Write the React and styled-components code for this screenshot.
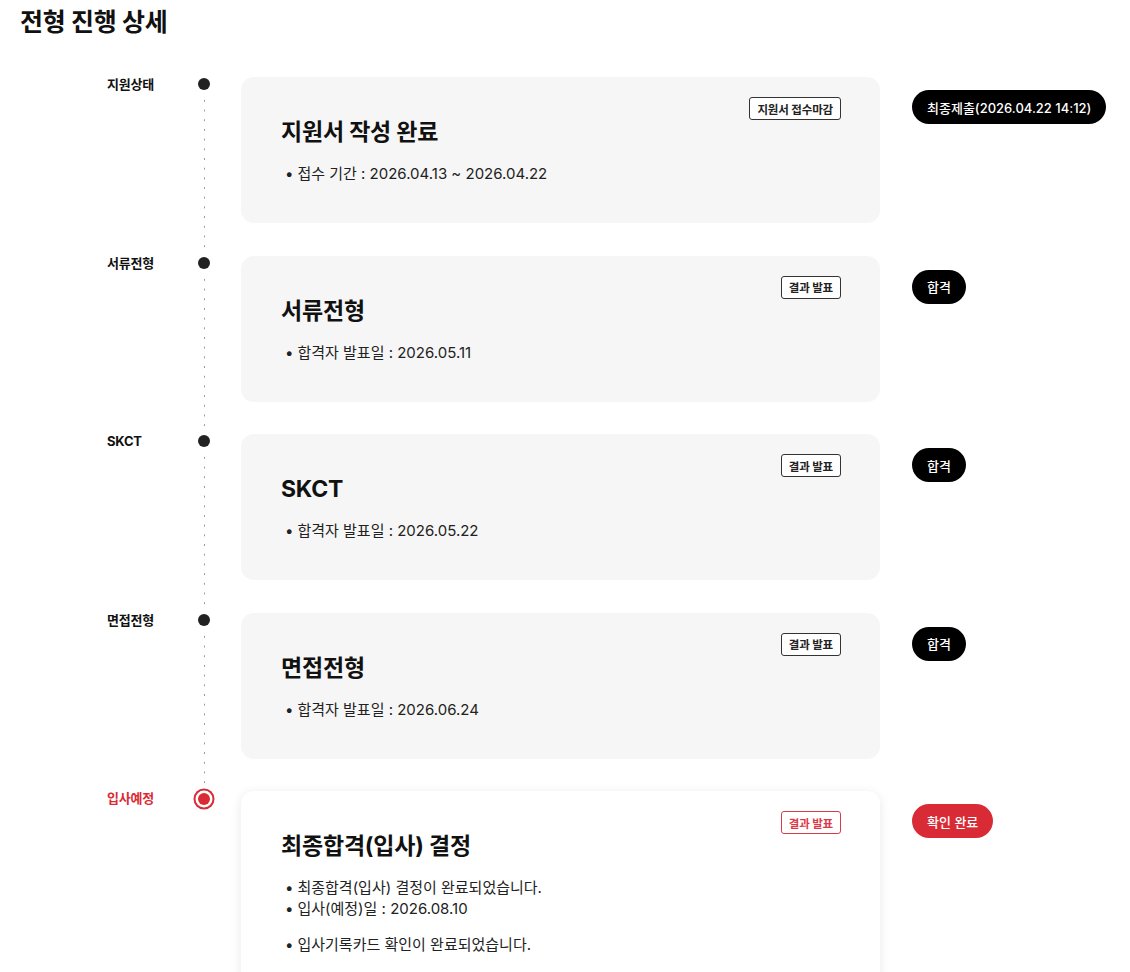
import React from "react";
import styled, { createGlobalStyle, css } from "styled-components";

const Global = createGlobalStyle`
  html, body { margin: 0; padding: 0; background: #fff; }
  body {
    font-family: Inter, "Noto Sans CJK KR", "Noto Sans", sans-serif;
    color: #111;
    -webkit-font-smoothing: antialiased;
  }
`;

const RED = "#d92b36";

const Page = styled.div`
  padding: 7px 0 0 20px;
  height: 972px;
  overflow: hidden;
  box-sizing: border-box;
`;

const PageTitle = styled.h1`
  margin: 0;
  font-size: 25px;
  line-height: 30px;
  font-weight: 700;
  color: #111;
  letter-spacing: -0.3px;
`;

const Timeline = styled.div`
  margin-top: 40px;
  padding-left: 87px;
  display: flex;
  flex-direction: column;
`;

const Row = styled.div`
  display: grid;
  grid-template-columns: 80px 54px 639px 1fr;
  align-items: stretch;
`;

const StepLabel = styled.div`
  font-size: 13px;
  line-height: 14px;
  font-weight: 700;
  color: ${(p) => (p.$active ? RED : "#111")};
  letter-spacing: -0.2px;
`;

const Rail = styled.div`
  display: flex;
  flex-direction: column;
  align-items: flex-start;
  padding-left: 11px;
`;

const Dot = styled.span`
  display: block;
  width: 12px;
  height: 12px;
  border-radius: 50%;
  background: #222;
  margin-top: 1px;
  flex: none;
  ${(p) =>
    p.$active &&
    css`
      background: ${RED};
      margin-top: 2px;
      box-shadow: 0 0 0 2.5px #fff, 0 0 0 4.5px ${RED};
    `}
`;

const DottedLine = styled.span`
  display: block;
  flex: 1;
  width: 1px;
  margin-left: 5.5px;
  margin-top: 6px;
  margin-bottom: 4px;
  background-image: linear-gradient(to bottom, transparent 0 4px, #9a9a9a 4px 5.5px, transparent 5.5px 10px);
  background-size: 1px 9.7px;
  background-repeat: repeat-y;
`;

const Card = styled.div`
  position: relative;
  box-sizing: border-box;
  min-height: 146px;
  margin-bottom: 32.5px;
  padding: 39px 40px 36px 40px;
  border-radius: 13px;
  background: ${(p) => (p.$active ? "#fff" : "#f6f6f6")};
  ${(p) =>
    p.$active &&
    css`
      box-shadow: 0 2px 12px rgba(0, 0, 0, 0.09);
      min-height: 240px;
      padding-bottom: 60px;
    `}
`;

const Tag = styled.span`
  position: absolute;
  top: 20px;
  right: 39px;
  height: 23px;
  box-sizing: border-box;
  padding: 0 7px;
  display: inline-flex;
  align-items: center;
  border: 1.5px solid ${(p) => (p.$active ? "#d93a4a" : "#333")};
  border-radius: 3px;
  font-size: 11.5px;
  font-weight: 700;
  color: ${(p) => (p.$active ? "#d93a4a" : "#222")};
  letter-spacing: -0.15px;
  background: #fff;
`;

const CardTitle = styled.h2`
  margin: 0;
  font-size: 23px;
  line-height: 32px;
  font-weight: 700;
  color: #111;
  letter-spacing: -0.2px;
`;

const Bullets = styled.ul`
  list-style: none;
  margin: 15px 0 0 4px;
  padding: 0;
`;

const Bullet = styled.li`
  font-size: 15px;
  line-height: 21px;
  color: #222;
  letter-spacing: 0;
  margin-top: ${(p) => (p.$spaced ? "15px" : "0")};
  &::before {
    content: "•";
    margin-right: 4px;
  }
`;

const Side = styled.div`
  padding-left: 32px;
  padding-top: ${(p) => p.$offset || 13}px;
`;

const Pill = styled.span`
  display: inline-flex;
  align-items: center;
  height: 34px;
  box-sizing: border-box;
  padding: 0 15px;
  border-radius: 17px;
  background: ${(p) => (p.$active ? RED : "#000")};
  color: #fff;
  font-size: 13px;
  font-weight: 500;
  letter-spacing: 0;
  white-space: nowrap;
`;

const steps = [
  {
    label: "지원상태",
    title: "지원서 작성 완료",
    tag: "지원서 접수마감",
    bullets: ["접수 기간 : 2026.04.13 ~ 2026.04.22"],
    pill: "최종제출(2026.04.22 14:12)",
    offset: 13,
  },
  {
    label: "서류전형",
    title: "서류전형",
    tag: "결과 발표",
    bullets: ["합격자 발표일 : 2026.05.11"],
    pill: "합격",
    offset: 14,
  },
  {
    label: "SKCT",
    title: "SKCT",
    tag: "결과 발표",
    bullets: ["합격자 발표일 : 2026.05.22"],
    pill: "합격",
    offset: 14,
  },
  {
    label: "면접전형",
    title: "면접전형",
    tag: "결과 발표",
    bullets: ["합격자 발표일 : 2026.06.24"],
    pill: "합격",
    offset: 14,
  },
  {
    label: "입사예정",
    title: "최종합격(입사) 결정",
    tag: "결과 발표",
    bullets: ["최종합격(입사) 결정이 완료되었습니다.", "입사(예정)일 : 2026.08.10"],
    extra: "입사기록카드 확인이 완료되었습니다.",
    pill: "확인 완료",
    offset: 13,
    active: true,
  },
];

export default function App() {
  return (
    <>
      <Global />
      <Page>
        <PageTitle>전형 진행 상세</PageTitle>
        <Timeline>
          {steps.map((s, i) => (
            <Row key={s.label}>
              <StepLabel $active={s.active}>{s.label}</StepLabel>
              <Rail>
                <Dot $active={s.active} />
                {i < steps.length - 1 && <DottedLine />}
              </Rail>
              <Card $active={s.active}>
                <Tag $active={s.active}>{s.tag}</Tag>
                <CardTitle>{s.title}</CardTitle>
                <Bullets>
                  {s.bullets.map((b) => (
                    <Bullet key={b}>{b}</Bullet>
                  ))}
                  {s.extra && <Bullet $spaced>{s.extra}</Bullet>}
                </Bullets>
              </Card>
              <Side $offset={s.offset}>
                <Pill $active={s.active}>{s.pill}</Pill>
              </Side>
            </Row>
          ))}
        </Timeline>
      </Page>
    </>
  );
}
